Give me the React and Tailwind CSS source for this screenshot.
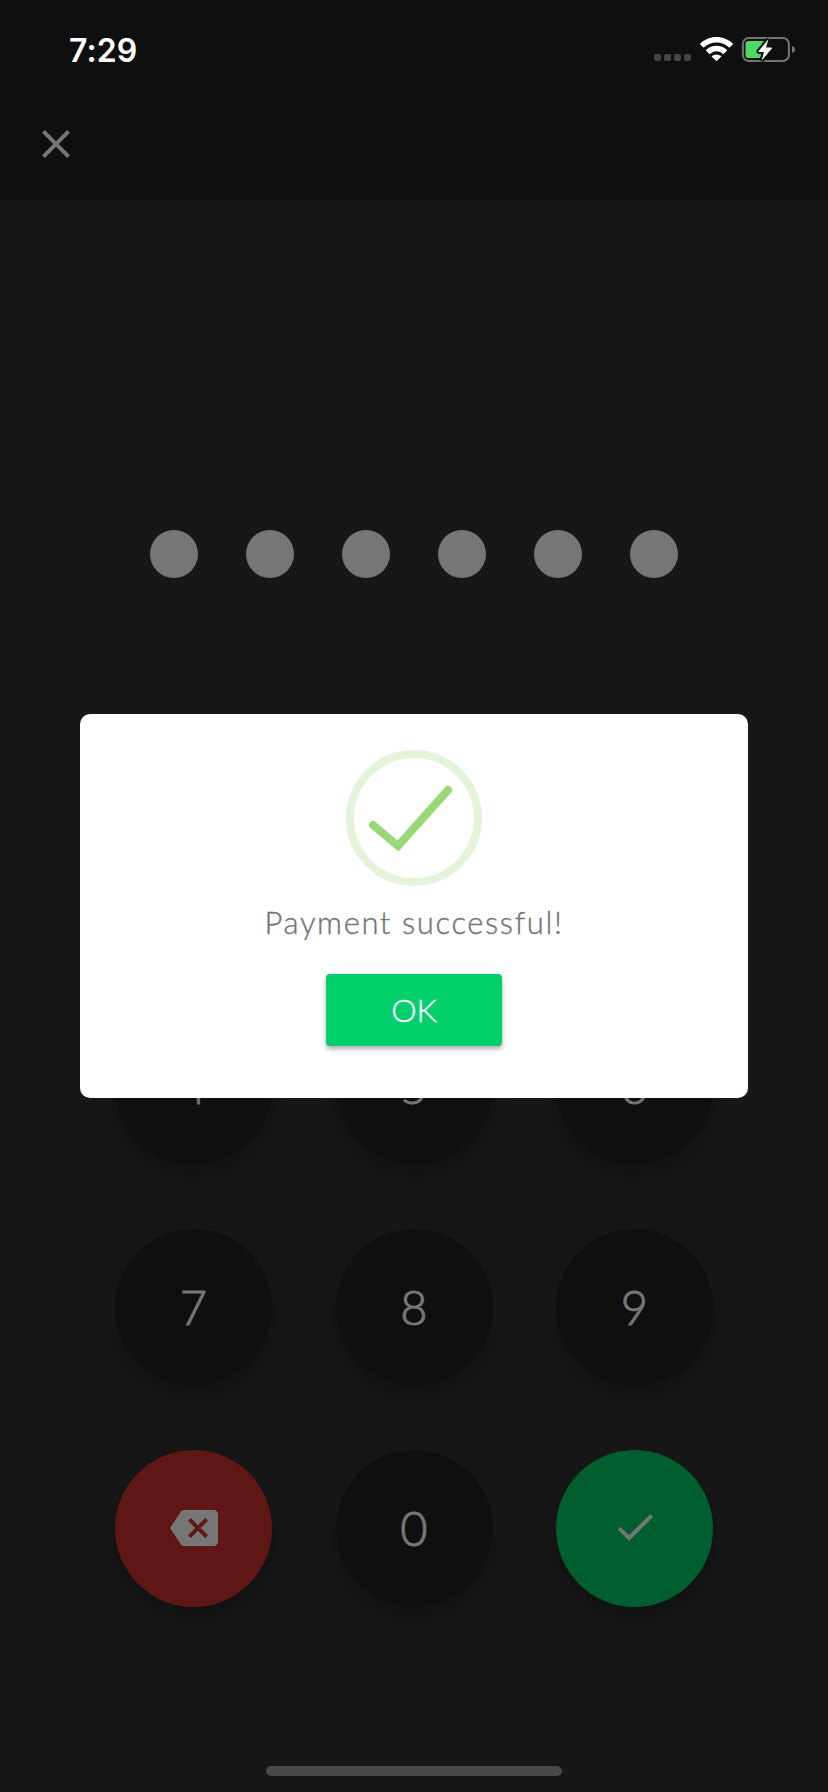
import React from 'react';

const DOTS = [0, 1, 2, 3, 4, 5];

const KEY_ROWS = [
  ['1', '2', '3'],
  ['4', '5', '6'],
  ['7', '8', '9'],
  ['delete', '0', 'confirm'],
];

const KEY_COLORS = { delete: 'bg-[#5f1716]', confirm: 'bg-[#005e2f]' };

function StatusBar() {
  return (
    <div className="flex h-[100px] items-start justify-between pl-[69px] pr-[33px]">
      <span className="pt-[31px] font-['Inter'] text-[32px] leading-10 font-semibold tracking-[0.1px] text-white">
        7:29
      </span>
      <div className="flex items-start pt-[36px]">
        <div className="mt-[18px] flex gap-[3px]">
          {[0, 1, 2, 3].map((i) => (
            <span key={i} className="size-[7px] rounded-[2px] bg-[#454545]" />
          ))}
        </div>
        <svg className="ml-[9px]" width="33" height="25" viewBox="0 0 33 25" fill="white">
          <path d="M16.5 1C22.8 1 28.5 3.6 32.7 7.4Q33.3 8 32.7 8.6L29.9 11.3Q29.4 11.8 28.8 11.3C25.5 8.2 21.2 6.4 16.5 6.4S7.5 8.2 4.2 11.3Q3.6 11.8 3.1 11.3L.3 8.6Q-.3 8 .3 7.4C4.5 3.6 10.2 1 16.5 1Z" />
          <path d="M16.5 9.8C20.4 9.8 24 11.3 26.7 13.8Q27.3 14.4 26.7 15L23.8 17.8Q23.3 18.3 22.7 17.8C21 16.3 18.9 15.2 16.5 15.2S12 16.3 10.3 17.8Q9.7 18.3 9.2 17.8L6.3 15Q5.7 14.4 6.3 13.8C9 11.3 12.6 9.8 16.5 9.8Z" />
          <path d="M16.5 18.4Q19 18.4 21.1 20Q21.5 20.4 21.1 20.8L17 24.8Q16.5 25.3 16 24.8L11.9 20.8Q11.5 20.4 11.9 20Q14 18.4 16.5 18.4Z" />
        </svg>
        <svg className="ml-[8px]" width="54" height="27" viewBox="0 0 54 27">
          <rect x="1.9" y="2" width="46" height="23" rx="6" fill="none" stroke="#747474" strokeWidth="2" />
          <path d="M51 10Q54 11 54 13.5T51 17Z" fill="#747474" />
          <path d="M7.5 5H24L16 16.5H20.5L19.5 22H7.5Q4.5 22 4.5 19V8Q4.5 5 7.5 5Z" fill="#4cd964" />
          <path
            d="M27.5 3 17.5 15.2Q17.2 16 18 16H23L20.5 24.8 30.8 12.4Q31.2 11.5 30.3 11.5H25Z"
            fill="white"
            stroke="#0f0f0f"
            strokeWidth="4"
            paintOrder="stroke"
          />
        </svg>
      </div>
    </div>
  );
}

function KeyFace({ name }) {
  if (name === 'delete') {
    return (
      <svg className="mb-px" width="48" height="36" viewBox="0 0 24 18" fill="#767676">
        <path d="M22 0H7C6.31 0 5.77.35 5.41.88L0 9l5.41 8.11c.36.53.9.89 1.59.89h15c1.1 0 2-.9 2-2V2c0-1.1-.9-2-2-2zm-3 12.59L17.59 14 14 10.41 10.41 14 9 12.59 12.59 9 9 5.41 10.41 4 14 7.59 17.59 4 19 5.41 15.41 9 19 12.59z" />
      </svg>
    );
  }
  if (name === 'confirm') {
    return (
      <svg className="mb-[3px] ml-px" width="48" height="48" viewBox="0 0 24 24" fill="#767676">
        <path d="M9 16.17 4.83 12l-1.42 1.41L9 19 21 7l-1.41-1.41z" />
      </svg>
    );
  }
  return <span className="mb-px">{name}</span>;
}

function Keypad() {
  return (
    <div className="mt-[209px] flex flex-col gap-16 px-[115px]">
      {KEY_ROWS.map((row) => (
        <div key={row[0]} className="flex justify-between">
          {row.map((name) => (
            <button
              key={name}
              className={`flex size-[157px] items-center justify-center rounded-full font-['Lato'] text-[47px] leading-none font-light text-[#767676] shadow-[0_10px_16px_rgba(0,0,0,0.24)] [-webkit-text-stroke:1px_#767676] ${KEY_COLORS[name] || 'bg-[#0f0f0f]'}`}
            >
              <KeyFace name={name} />
            </button>
          ))}
        </div>
      ))}
    </div>
  );
}

function SuccessDialog() {
  return (
    <div className="absolute inset-0 flex items-start justify-center pt-[714px]">
      <div className="flex h-[384px] w-[668px] flex-col items-center rounded-[10px] bg-white pt-[36px]">
        <svg width="136" height="136" viewBox="0 0 136 136" fill="none" strokeWidth="8">
          <circle cx="68" cy="68" r="64" stroke="#e4f4db" />
          <path d="M27 75 52 96 102 40" stroke="#97d976" strokeLinecap="round" />
        </svg>
        <p className="mt-4 font-['Lato'] text-[31px] leading-10 font-light tracking-[1.6px] whitespace-nowrap text-[#757575] [-webkit-text-stroke:0.4px_#757575]">
          Payment successful!
        </p>
        <button className="mt-8 h-[72px] w-[176px] rounded-[4px] bg-[#03cf6b] font-['Lato'] text-[32px] leading-none font-light text-white shadow-[0_3px_5px_rgba(0,0,0,0.32)] [-webkit-text-stroke:0.4px_white]">
          OK
        </button>
      </div>
    </div>
  );
}

export default function App() {
  return (
    <div className="relative flex h-[1792px] w-[828px] flex-col overflow-hidden bg-[#171717]">
      <header className="h-[200px] bg-[#0f0f0f]">
        <StatusBar />
        <svg className="mt-[30px] ml-[42px]" width="28" height="28" viewBox="0 0 28 28" stroke="#767676" strokeWidth="4">
          <path d="M1.4 1.4 26.6 26.6M26.6 1.4 1.4 26.6" />
        </svg>
      </header>
      <div className="mt-[330px] flex justify-center gap-12">
        {DOTS.map((i) => (
          <span key={i} className="size-12 rounded-full bg-[#767676]" />
        ))}
      </div>
      <Keypad />
      <div className="mt-auto mb-4 h-[10px] w-[296px] self-center rounded-full bg-[#484848]" />
      <SuccessDialog />
    </div>
  );
}
